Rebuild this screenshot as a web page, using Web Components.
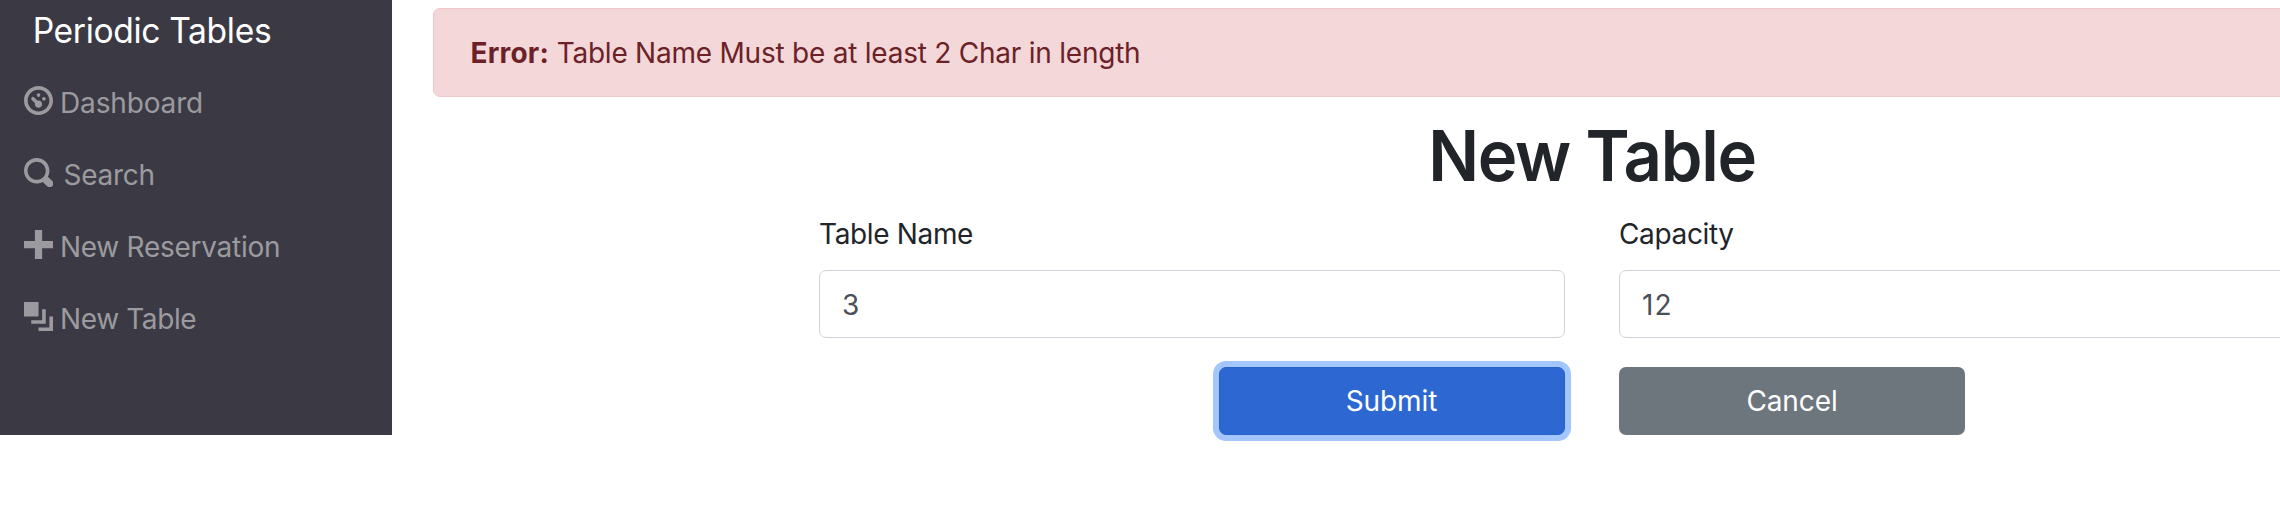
<!DOCTYPE html>
<html lang="en">
<head>
<meta charset="utf-8">
<title>Periodic Tables</title>
<style>
html,body{margin:0;height:100%;overflow:hidden;background:#fff}
body{font:400 28px/42px Inter,"Liberation Sans",sans-serif;color:#212529}
</style>
</head>
<body>
<pt-app></pt-app>
<script>
const define = (name, html, attr, update) => customElements.define(name, class extends HTMLElement {
  static observedAttributes = attr ? [attr] : [];
  constructor() {
    super();
    const t = document.createElement('template');
    t.innerHTML = html;
    this.attachShadow({mode: 'open'}).append(t.content.cloneNode(true));
  }
  attributeChangedCallback(_, before, value) { if (value !== null) update(this.shadowRoot, value); }
});

const icons = {
  dial: 'M4 0c-2.2 0-4 1.8-4 4s1.8 4 4 4 4-1.8 4-4-1.8-4-4-4zm0 1c1.66 0 3 1.34 3 3s-1.34 3-3 3-3-1.34-3-3 1.34-3 3-3zm0 1c-.28 0-.5.22-.5.5s.22.5.5.5.5-.22.5-.5-.22-.5-.5-.5zm-1.66 1a.5.5 0 0 0-.19.84l.91.91c-.02.08-.06.16-.06.25 0 .55.45 1 1 1s1-.45 1-1-.45-1-1-1c-.09 0-.17.04-.25.06l-.91-.91a.5.5 0 0 0-.44-.16.5.5 0 0 0-.06 0zm3.16 0c-.28 0-.5.22-.5.5s.22.5.5.5.5-.22.5-.5-.22-.5-.5-.5z',
  search: 'M3.5 0c-1.93 0-3.5 1.57-3.5 3.5s1.57 3.5 3.5 3.5c.59 0 1.17-.14 1.66-.41a1 1 0 0 0 .13.13l1 1a1.02 1.02 0 1 0 1.44-1.44l-1-1a1 1 0 0 0-.16-.13c.27-.49.44-1.06.44-1.66 0-1.93-1.55-3.5-3.5-3.5zm0 1c1.39 0 2.5 1.11 2.5 2.5 0 .66-.24 1.27-.66 1.72l-.03.03a1 1 0 0 0-.13.13c-.44.4-1.04.63-1.69.63-1.39 0-2.5-1.11-2.5-2.5s1.11-2.5 2.5-2.5z',
  plus: 'M3 0v3h-3v2h3v3h2v-3h3v-2h-3v-3h-2z',
  layers: 'M0 0v4h4v-4h-4zm5 2v3h-3v1h4v-4h-1zm2 2v3h-3v1h4v-4h-1z'
};

define('pt-icon', `<style>:host{display:block;width:29px;height:29px;flex:none}svg{display:block;width:100%;height:100%;fill:currentColor}</style><svg viewBox="0 0 8 8"><path/></svg>`,
  'name', (root, v) => root.querySelector('path').setAttribute('d', icons[v]));

define('pt-nav-link', `<style>
:host{display:block}
a{display:flex;align-items:center;height:72px;gap:var(--gap,7px);color:#9b9b9f;white-space:nowrap;letter-spacing:var(--track,-.27px)}
pt-icon{margin-bottom:5px}
</style><a><pt-icon></pt-icon><span><slot></slot></span></a>`,
  'icon', (root, v) => root.querySelector('pt-icon').setAttribute('name', v));

define('pt-sidebar', `<style>
:host{display:block;box-sizing:border-box;width:392px;height:435px;flex:none;background:#3b3a44;padding-left:24px}
.brand{height:67px;line-height:61px;padding-left:9px;font-size:35px;letter-spacing:-.36px;color:#fff;white-space:nowrap;transform:scaleX(.96);transform-origin:0 0}
</style><div class="brand"><slot name="brand"></slot></div><nav><slot></slot></nav>`);

define('pt-alert', `<style>
:host{display:flex;align-items:center;box-sizing:border-box;height:89px;padding-left:36.5px;border:1px solid #f1c6ca;border-radius:7px;background:#f3d7d9;color:#6c2127;letter-spacing:-.23px;white-space:pre}
b{font-weight:700;letter-spacing:.2px}
</style><span><b><slot name="title"></slot></b> <slot></slot></span>`);

define('pt-field', `<style>
:host{display:block}
label{display:block;height:43px;line-height:45px;margin-bottom:15px;letter-spacing:-.35px}
.control{box-sizing:border-box;height:68px;border:1px solid #ced4da;border-radius:7px;padding:1px 22px 0;line-height:66px;color:#495057;background:#fff}
</style><label></label><div class="control"><slot></slot></div>`,
  'label', (root, v) => root.querySelector('label').textContent = v);

define('pt-button', `<style>
:host{display:block;width:346px}
button{display:block;width:100%;height:68px;border:0;border-radius:7px;padding:0;font:inherit;letter-spacing:-.1px;color:#fff;background:#6d757d}
:host([primary]) button{padding-right:1px;background:#2d67d1;border:1px solid #2a61c6;box-shadow:0 0 0 6px #a3c6fd}
</style><button type="button"><slot></slot></button>`);

define('pt-form', `<style>
:host{display:grid;grid-template-columns:746px 746px;gap:29px 54px;justify-content:center;margin-top:14px}
pt-button[primary]{justify-self:end}
</style>
<pt-field label="Table Name">3</pt-field>
<pt-field label="Capacity" style="letter-spacing:1px">12</pt-field>
<pt-button primary>Submit</pt-button>
<pt-button>Cancel</pt-button>`);

define('pt-app', `<style>
:host{display:flex;align-items:flex-start;width:2280px;height:516px;overflow:hidden}
main{flex:none;width:2318px;padding:8px 0 0 41px}
h1{margin:16px 0 0;height:85px;line-height:85px;font-size:70.5px;font-weight:600;letter-spacing:-1.35px;text-align:center;transform:scaleX(.95)}
.search{--gap:10.5px}
</style>
<pt-sidebar>
<span slot="brand">Periodic Tables</span>
<pt-nav-link icon="dial" style="--track:-.15px">Dashboard</pt-nav-link>
<pt-nav-link icon="search" class="search">Search</pt-nav-link>
<pt-nav-link icon="plus">New Reservation</pt-nav-link>
<pt-nav-link icon="layers" style="--track:-.38px">New Table</pt-nav-link>
</pt-sidebar>
<main>
<pt-alert><span slot="title">Error:</span>Table Name Must be at least 2 Char in length</pt-alert>
<h1>New Table</h1>
<pt-form></pt-form>
</main>`);
</script>
</body>
</html>
